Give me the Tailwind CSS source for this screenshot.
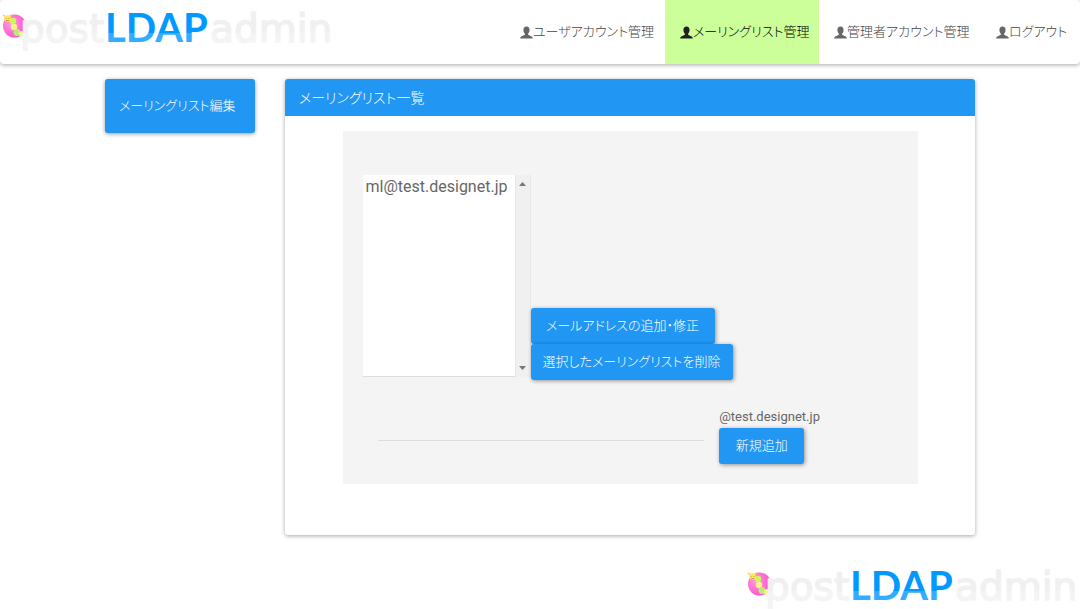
<!DOCTYPE html>
<html lang="ja">
<head>
<meta charset="utf-8">
<meta name="viewport" content="width=device-width, initial-scale=1">
<title>postLDAPadmin</title>
<script src="https://cdn.jsdelivr.net/npm/@tailwindcss/browser@4"></script>
</head>
<body class="flex min-h-screen flex-col bg-white font-['Roboto','Noto_Sans_CJK_JP',sans-serif] text-[13px] leading-[20px] font-light text-[#444] [font-feature-settings:'palt']">

<svg class="absolute h-0 w-0" aria-hidden="true">
  <defs>
    <linearGradient id="blue" gradientUnits="userSpaceOnUse" x1="0" y1="0" x2="0" y2="50">
      <stop offset="0.65" stop-color="#0099ff"/><stop offset="0.67" stop-color="#33adff"/>
    </linearGradient>
    <linearGradient id="grey" gradientUnits="userSpaceOnUse" x1="0" y1="0" x2="0" y2="50">
      <stop offset="0.65" stop-color="#f0f0f0"/><stop offset="0.67" stop-color="#f4f4f4"/>
    </linearGradient>
    <radialGradient id="pink" cx="0.35" cy="0.4" r="0.65">
      <stop offset="0" stop-color="#ff9be0"/><stop offset="1" stop-color="#ff52cc"/>
    </radialGradient>
    <symbol id="logo" viewBox="0 0 335 51">
      <circle cx="14.5" cy="26" r="11.5" fill="url(#pink)"/>
      <circle cx="13" cy="21" r="3.2" fill="#c8f85c"/>
      <circle cx="14" cy="27" r="3.2" fill="#fbf28a"/>
      <circle cx="17" cy="32.500" r="3.400" fill="#b4f078"/>
      <circle cx="22" cy="34" r="3" fill="#fbf28a"/>
      <path d="M3 15l3 2M12 14.500l-2 2.500" stroke="#eccb50" stroke-width="1.500" fill="none"/>
      <circle cx="7.500" cy="18.500" r="3.300" fill="#ffe566"/>
      <path d="M6 18v1M9 18v1M6 20.500h3" stroke="#c88a20" stroke-width="0.800"/>
      <g font-family="DejaVu Sans" font-weight="400" font-size="39" fill="url(#grey)" stroke="url(#grey)" stroke-width="1.500">
        <text x="20" y="42">post</text>
        <text x="210" y="42">admin</text>
      </g>
      <text x="105" y="42" font-family="Lato" font-weight="700" font-size="40" fill="url(#blue)">LDAP</text>
    </symbol>
    <symbol id="user" viewBox="0 0 14 13">
      <path d="M7 0C4.700 0 3.700 1.600 3.700 3.700c0 1.700.600 3.100 1.500 3.900v1.200C4.800 9.600 0.500 10.200 0.300 12v1h13.400v-1c-.200-1.800-4.500-2.400-4.900-3.200V7.600c.900-.800 1.500-2.200 1.500-3.900C10.300 1.600 9.300 0 7 0z" fill="currentColor"/>
    </symbol>
  </defs>
</svg>

<header class="flex h-16 items-start justify-between rounded-sm shadow-[0_1px_4px_rgba(0,0,0,0.35)]">
  <a href="#" aria-label="postLDAPadmin"><svg class="h-[51px] w-[335px]"><use href="#logo"/></svg></a>
  <nav class="flex whitespace-nowrap">
    <a href="#" class="flex h-16 w-[160px] items-center pl-[15px]"><svg class="h-[13px] w-[13px] shrink-0 text-[#666]"><use href="#user"/></svg>ユーザアカウント管理</a>
    <a href="#" class="flex h-16 w-[154px] items-center bg-[#ccff99] pl-[15px] text-black"><svg class="h-[13px] w-[13px] shrink-0 text-[#212121]"><use href="#user"/></svg>メーリングリスト管理</a>
    <a href="#" class="flex h-16 w-[162px] items-center pl-[15px]"><svg class="h-[13px] w-[13px] shrink-0 text-[#666]"><use href="#user"/></svg>管理者アカウント管理</a>
    <a href="#" class="flex h-16 w-[99px] items-center pl-[15px]"><svg class="h-[13px] w-[13px] shrink-0 text-[#666]"><use href="#user"/></svg>ログアウト</a>
  </nav>
</header>

<main class="mx-auto mt-[15px] flex w-full max-w-[900px] items-start gap-[30px] px-[15px]">
  <aside class="w-[150px] shrink-0">
    <a href="#" class="flex h-[54px] items-center rounded-[3px] bg-[#2196f3] px-[14px] text-white shadow-[0_1px_4px_rgba(0,0,0,0.4)]">メーリングリスト編集</a>
  </aside>
  <section class="flex-1 rounded-[3px] pb-[51px] shadow-[0_1px_4px_rgba(0,0,0,0.35)]">
    <h1 class="rounded-t-[3px] bg-[#2196f3] px-[14px] pt-[9px] pb-[7px] text-[14px] leading-[21px] text-white">メーリングリスト一覧</h1>
    <form class="mx-auto mt-[15px] w-5/6 bg-[#f4f4f4] px-5 pt-11 pb-5">
      <div class="flex items-end">
        <div class="flex h-[202px]">
          <select size="5" aria-label="メーリングリスト" class="w-[152px] appearance-none overflow-hidden border-b border-[#ddd] bg-white text-[16px] leading-[22px] font-normal text-[#666]">
            <option class="px-[3px] py-[2px]">ml@test.designet.jp</option>
          </select>
          <div class="flex w-4 flex-col items-center justify-between border-x border-[#e8e8e8] bg-[#f0f0f0] py-[7px]" aria-hidden="true">
            <svg class="h-1 w-[7px]" viewBox="0 0 7 4"><path d="M0 4L3.500 0L7 4z" fill="#777"/></svg>
            <svg class="h-1 w-[7px]" viewBox="0 0 7 4"><path d="M0 0L3.500 4L7 0z" fill="#777"/></svg>
          </div>
        </div>
        <div class="-mb-[3px] flex flex-col items-start">
          <button type="button" class="h-9 w-[184px] rounded-[3px] bg-[#2196f3] text-white shadow-[1px_1px_4px_rgba(0,0,0,0.4)]">メールアドレスの追加・修正</button>
          <button type="button" class="h-9 w-[202px] rounded-[3px] bg-[#2196f3] text-white shadow-[1px_1px_4px_rgba(0,0,0,0.4)]">選択したメーリングリストを削除</button>
        </div>
      </div>
      <div class="mt-[30px] flex">
        <div class="w-2/3 px-[15px]">
          <input type="text" aria-label="新しいメーリングリスト名" class="h-[34px] w-full border-b border-[#ddd] bg-transparent text-[16px] outline-none">
        </div>
        <div class="flex flex-col items-start">
          <span class="h-[21px] font-normal text-[#666]">@test.designet.jp</span>
          <button type="button" class="h-9 w-[85px] rounded-[3px] bg-[#2196f3] text-white shadow-[1px_1px_4px_rgba(0,0,0,0.4)]">新規追加</button>
        </div>
      </div>
    </form>
  </section>
</main>

<footer class="mt-auto flex justify-end">
  <svg class="h-[51px] w-[335px]" role="img" aria-label="postLDAPadmin"><use href="#logo"/></svg>
</footer>
</body>
</html>
